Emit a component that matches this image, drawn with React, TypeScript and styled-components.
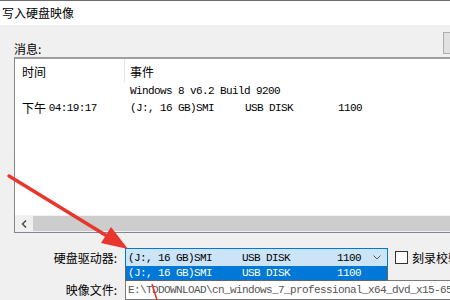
import styled, { createGlobalStyle } from 'styled-components';

const cjk = `"Noto Sans CJK SC", "Microsoft YaHei", sans-serif`;
const mono = `"Liberation Mono", "Noto Sans CJK SC", monospace`;

const GlobalStyle = createGlobalStyle`
  html, body {
    margin: 0;
    padding: 0;
    width: 450px;
    height: 300px;
    overflow: hidden;
    background: #f0f0f0;
  }
  #root {
    position: relative;
    width: 450px;
    height: 300px;
    overflow: hidden;
  }
`;

const Window = styled.div`
  width: 620px;
  display: flex;
  flex-direction: column;
  font-family: ${cjk};
  font-size: 12px;
  color: #000;
`;

const TitleBar = styled.div`
  height: 24px;
  border-top: 1px solid #6e6e6e;
  background: #ffffff;
  padding-left: 2px;
  display: flex;
  align-items: center;
  line-height: 1;
`;

const Body = styled.div`
  background: #f0f0f0;
  padding: 7px 0 0 14px;
  display: flex;
  flex-direction: column;
`;

const MessageHeader = styled.div`
  display: flex;
  height: 25px;
`;

const MessageLabel = styled.span`
  flex: 0 0 429px;
  align-self: flex-end;
  line-height: 16px;
`;

const SideButton = styled.div`
  width: 70px;
  height: 22px;
  box-sizing: border-box;
  border: 1px solid #adadad;
  background: #e1e1e1;
`;

const ListView = styled.div`
  width: 560px;
  height: 176px;
  box-sizing: border-box;
  border: 1px solid #828790;
  border-top: 2px solid #a0a0a0;
  background: #ffffff;
  display: flex;
  flex-direction: column;
`;

const ListRow = styled.div<{ $header?: boolean }>`
  display: grid;
  grid-template-columns: 110px 1fr;
  height: ${({ $header }) => ($header ? '23px' : '17px')};
  align-items: center;
`;

const HeaderCell = styled.div<{ $first?: boolean }>`
  height: 100%;
  display: flex;
  align-items: center;
  padding-left: ${({ $first }) => ($first ? '7px' : '5px')};
  padding-top: 2px;
  box-sizing: border-box;
  border-right: ${({ $first }) => ($first ? '1px solid #e5e5e5' : 'none')};
`;

const Cell = styled.div<{ $first?: boolean }>`
  padding-left: ${({ $first }) => ($first ? '7px' : '5px')};
  display: flex;
  align-items: center;
  white-space: nowrap;
`;

const Mono = styled.span<{ $color?: string }>`
  font-family: ${mono};
  font-size: 11px;
  letter-spacing: -0.6px;
  color: ${({ $color }) => $color ?? 'inherit'};
  white-space: pre;
`;

const DriveCol = styled(Mono)<{ $w?: number }>`
  display: inline-block;
  width: ${({ $w }) => ($w ? `${$w}px` : 'auto')};
`;

const Filler = styled.div`
  flex: 1;
`;

const HScrollBar = styled.div`
  height: 17px;
  display: flex;
  background: #f0f0f0;
`;

const ScrollArrow = styled.div`
  width: 18px;
  display: flex;
  align-items: center;
  justify-content: center;
`;

const ScrollThumb = styled.div`
  flex: 1;
  margin: 1px 0;
  background: #cdcdcd;
`;

const Form = styled.div`
  display: grid;
  grid-template-columns: 111px auto;
  row-gap: 13px;
  margin-top: 15px;
  align-items: center;
`;

const FormLabel = styled.div`
  text-align: right;
  padding-right: 8px;
  line-height: 16px;
  white-space: nowrap;
`;

const ControlLine = styled.div`
  display: flex;
  align-items: center;
`;

const Combo = styled.div`
  position: relative;
  width: 263px;
  height: 19px;
  box-sizing: border-box;
  border: 1px solid #0078d7;
  background: #cce4f7;
  display: flex;
  align-items: center;
  padding-left: 2px;
`;

const ComboValue = styled.div`
  flex: 1;
  display: flex;
  align-items: center;
`;

const Chevron = styled.svg`
  margin-right: 6px;
`;

const ComboPopup = styled.div`
  position: absolute;
  top: 100%;
  left: -1px;
  width: 263px;
  box-sizing: border-box;
  border: 1px solid #646464;
  border-top: none;
  background: #ffffff;
  z-index: 2;
`;

const PopupItem = styled.div`
  height: 14px;
  background: #0078d7;
  color: #ffffff;
  display: flex;
  align-items: center;
  padding-left: 2px;
`;

const CheckBox = styled.div`
  width: 13px;
  height: 13px;
  box-sizing: border-box;
  border: 1px solid #333333;
  background: #ffffff;
  margin-left: 7px;
`;

const CheckLabel = styled.span`
  margin-left: 4px;
  white-space: nowrap;
`;

const TextBox = styled.div`
  width: 340px;
  height: 20px;
  box-sizing: border-box;
  border: 1px solid #7a7a7a;
  background: #ffffff;
  padding-left: 2px;
  display: flex;
  align-items: center;
  overflow: hidden;
`;

const Annotation = styled.svg`
  position: absolute;
  left: 0;
  top: 0;
  width: 450px;
  height: 300px;
  pointer-events: none;
  z-index: 10;
`;

interface DriveLineProps {
  color?: string;
  first: number;
  second: number;
}

const DriveLine = ({ color, first, second }: DriveLineProps) => (
  <>
    <DriveCol $w={first} $color={color}>(J:, 16 GB)SMI</DriveCol>
    <DriveCol $w={second} $color={color}>USB DISK</DriveCol>
    <DriveCol $color={color}>1100</DriveCol>
  </>
);

export default function App() {
  return (
    <>
      <GlobalStyle />
      <Window>
        <TitleBar>写入硬盘映像</TitleBar>
        <Body>
          <MessageHeader>
            <MessageLabel>消息:</MessageLabel>
            <SideButton />
          </MessageHeader>
          <ListView>
            <ListRow $header>
              <HeaderCell $first>时间</HeaderCell>
              <HeaderCell>事件</HeaderCell>
            </ListRow>
            <ListRow>
              <Cell $first />
              <Cell>
                <Mono>Windows 8 v6.2 Build 9200</Mono>
              </Cell>
            </ListRow>
            <ListRow>
              <Cell $first>
                下午&nbsp;<Mono>04:19:17</Mono>
              </Cell>
              <Cell>
                <DriveLine first={115} second={93} />
              </Cell>
            </ListRow>
            <Filler />
            <HScrollBar>
              <ScrollArrow>
                <svg width="6" height="8" viewBox="0 0 6 8">
                  <polyline points="5,0.5 1.5,4 5,7.5" fill="none" stroke="#444" strokeWidth="1.4" />
                </svg>
              </ScrollArrow>
              <ScrollThumb />
            </HScrollBar>
          </ListView>
          <Form>
            <FormLabel>硬盘驱动器:</FormLabel>
            <ControlLine>
              <Combo>
                <ComboValue>
                  <DriveLine first={114} second={95} />
                </ComboValue>
                <Chevron width="8" height="5" viewBox="0 0 8 5">
                  <polyline points="0.5,0.5 4,4 7.5,0.5" fill="none" stroke="#5a5a5a" strokeWidth="1" />
                </Chevron>
                <ComboPopup>
                  <PopupItem>
                    <DriveLine color="#ffffff" first={114} second={95} />
                  </PopupItem>
                </ComboPopup>
              </Combo>
              <CheckBox />
              <CheckLabel>刻录校验</CheckLabel>
            </ControlLine>
            <FormLabel>映像文件:</FormLabel>
            <TextBox>
              <Mono $color="#555555">E:\TDDOWNLOAD\cn_windows_7_professional_x64_dvd_x15-65</Mono>
            </TextBox>
          </Form>
        </Body>
      </Window>
      <Annotation viewBox="0 0 450 300">
        <line x1="9" y1="176" x2="107" y2="236" stroke="#e8362d" strokeWidth="3.5" strokeLinecap="round" />
        <polygon points="128,249 101,243 111,227" fill="#e8362d" />
        <line x1="152" y1="284" x2="157" y2="300" stroke="#e8362d" strokeWidth="1.5" />
      </Annotation>
    </>
  );
}
